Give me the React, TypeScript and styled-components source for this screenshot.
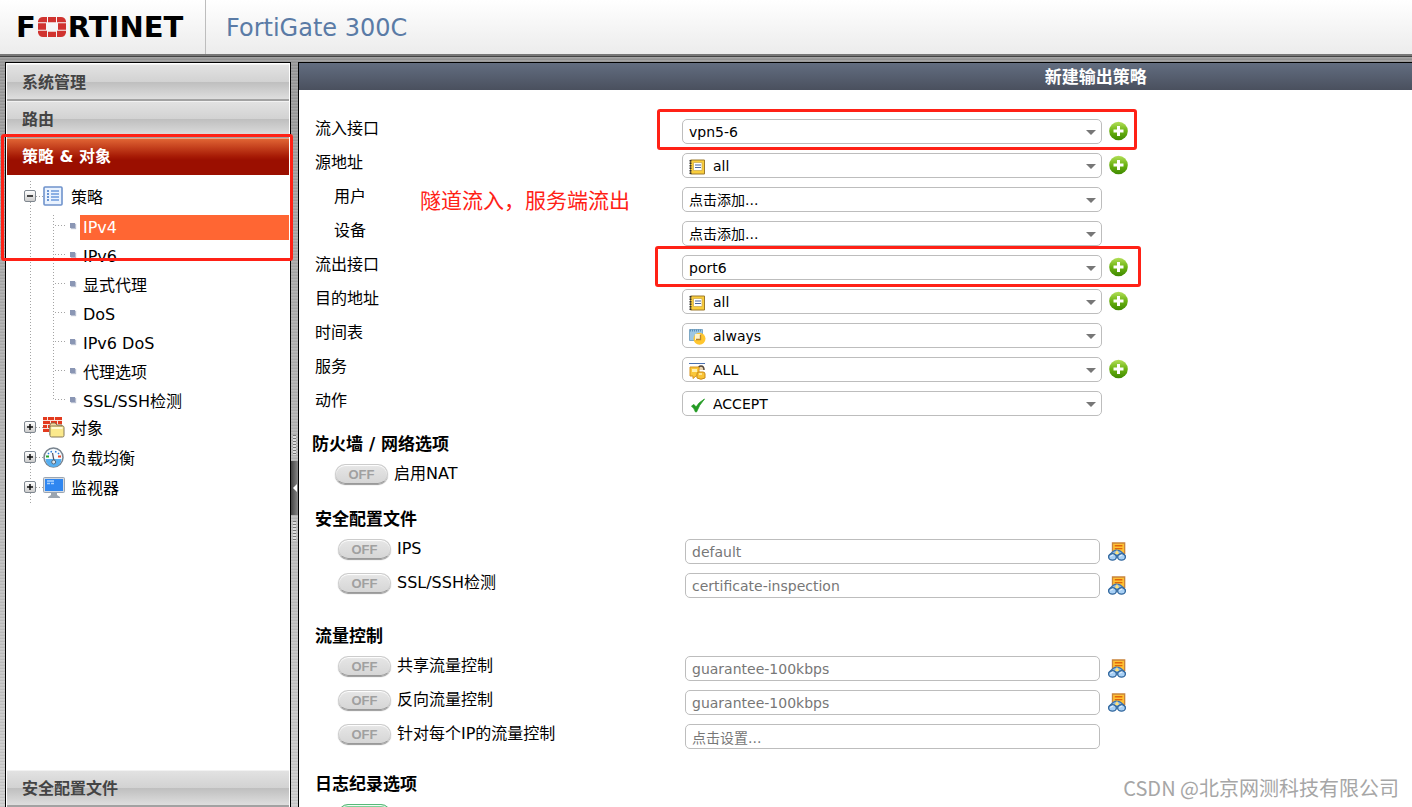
import React, { useId } from "react";
import styled, { createGlobalStyle, css } from "styled-components";

const uiFont = `"DejaVu Sans", "Noto Sans CJK SC", sans-serif`;
const markRed = "#ff2116";

const GlobalStyle = createGlobalStyle`
  *, *::before, *::after { box-sizing: border-box; }
  body { margin: 0; font-family: ${uiFont}; font-size: 16px; color: #000; }
  ul, h1, h2 { margin: 0; padding: 0; list-style: none; }
  svg { display: block; flex: none; }
`;

const Page = styled.div`
  position: relative;
  display: flex;
  flex-direction: column;
  height: 100vh;
  overflow: hidden;
  background:
    repeating-linear-gradient(rgba(255, 255, 255, 0.1) 0 1px, transparent 1px 2px, rgba(0, 0, 0, 0.06) 2px 3px),
    linear-gradient(#959595, #b0b0b0 40%, #cfcfcf);
`;

const Header = styled.header`
  display: flex;
  flex: none;
  height: 56px;
  border-bottom: 2px solid #777;
  background: linear-gradient(#fff, #ececec);
`;

const Logo = styled.div`
  display: flex;
  align-items: center;
  gap: 2px;
  width: 206px;
  padding-left: 16px;
  border-right: 1px solid #bdbdbd;
  font-size: 29px;
  line-height: 56px;
  font-weight: 700;
`;

const Product = styled.div`
  padding-left: 20px;
  font-size: 24px;
  line-height: 56px;
  color: #5a7ba6;
`;

const Body = styled.div`
  display: flex;
  flex: 1;
  min-height: 0;
  border-top: 1px solid #444;
  padding: 5px 0 0 5px;
`;

const Sidebar = styled.nav`
  position: relative;
  display: flex;
  flex: none;
  flex-direction: column;
  width: 286px;
  border: 1px solid #000;
  border-bottom: 0;
  padding: 1px 1px 0;
  background: #fff;
`;

const MenuItem = styled.button<{ $active?: boolean }>`
  flex: none;
  height: 37px;
  border: 0;
  border-top: 1px solid #f2f2f2;
  border-bottom: 2px solid #a2a2a2;
  padding: 1px 15px 0;
  text-align: left;
  font: 700 16px/33px ${uiFont};
  color: #444;
  background: linear-gradient(#e2e2e2, #d2d2d2 50%, #bfbfbf 51%, #dedede);
  ${(p) =>
    p.$active &&
    css`
      color: #fff;
      border-top-color: #f0a080;
      border-bottom-color: #9b0f00;
      background: linear-gradient(#e06434, #a81c06 50%, #9b0f00 62%);
    `}
`;

const dots = "repeating-linear-gradient(#a4a4a4 0 1px, transparent 1px 3px)";
const hdots = "repeating-linear-gradient(90deg, #a4a4a4 0 1px, transparent 1px 3px)";

const Tree = styled.ul`
  display: flex;
  flex-direction: column;
  margin: 6px 0 auto;
  background: ${dots} 23px 0 / 1px 100% no-repeat;
`;

const BranchRow = styled.div<{ $tall?: boolean }>`
  display: flex;
  align-items: center;
  height: ${(p) => (p.$tall ? 34 : 30)}px;
  padding-left: 17px;
`;

const Expander = styled.button`
  display: grid;
  place-items: center;
  width: 12px;
  height: 12px;
  margin-bottom: 4px;
  border: 1px solid #808890;
  border-radius: 2px;
  padding: 0;
  background: linear-gradient(#fff, #ccc);
`;

const Dash = styled.span<{ $w: number }>`
  width: ${(p) => p.$w}px;
  height: 1px;
  margin-bottom: 4px;
  background: ${hdots};
`;

const BranchLink = styled.a`
  display: grid;
  grid-template-columns: 28px auto;
  align-items: center;
  color: #000;
  text-decoration: none;
  line-height: 24px;
  svg { margin-bottom: 4px; }
`;

const Leaves = styled.ul`
  display: flex;
  flex-direction: column;
  gap: 4px;
  background: ${dots} 46px 0 / 1px 184px no-repeat;
`;

const Leaf = styled.li`
  display: flex;
  align-items: center;
  height: 25px;
  padding-left: 48px;
`;

const Bullet = styled.span`
  width: 5px;
  height: 5px;
  margin: 0 5px 4px 4px;
  background: #8a96b4;
  box-shadow: 1px 1px 1px #b8bfd0;
`;

const LeafLink = styled.a<{ $active?: boolean }>`
  flex: 1;
  padding-left: 3px;
  line-height: 25px;
  text-decoration: none;
  color: ${(p) => (p.$active ? "#fff" : "#000")};
  background: ${(p) => (p.$active ? "#ff6633" : "transparent")};
`;

const Splitter = styled.div`
  display: flex;
  flex: none;
  flex-direction: column;
  align-items: center;
  justify-content: center;
  gap: 6px;
  width: 7px;
  padding-top: 106px;
`;

const Grip = styled.span`
  width: 3px;
  height: 20px;
  background: repeating-linear-gradient(#777 0 1px, #ddd 1px 3px);
`;

const Collapse = styled.button`
  display: grid;
  place-items: center;
  width: 7px;
  height: 54px;
  border: 0;
  padding: 0;
  background: linear-gradient(90deg, #444, #888);
`;

const Panel = styled.main`
  flex: 1;
  min-width: 0;
  border: solid #000;
  border-width: 1px 0 0 1px;
  background: #fff;
`;

const PanelTitle = styled.h1`
  padding: 1px 0 0 67%;
  font-size: 17px;
  line-height: 26px;
  color: #fff;
  background: linear-gradient(#626d80, #4a505e);
`;

const Form = styled.form`
  position: relative;
  padding: 29px 0 0 13px;
`;

const Section = styled.section<{ $space?: number; $indent?: number }>`
  display: flex;
  flex-direction: column;
  gap: 8px;
  margin-top: ${(p) => p.$space ?? 0}px;
  padding-left: ${(p) => p.$indent ?? 3}px;
`;

const SectionTitle = styled.h2`
  font-size: 17px;
  line-height: 24px;
`;

const Row = styled.div`
  display: grid;
  grid-template-columns: 367fr 420fr 310fr;
  height: 26px;
`;

const Label = styled.label<{ $nested?: boolean }>`
  padding-left: ${(p) => (p.$nested ? 19 : 0)}px;
  line-height: 19px;
`;

const SwitchCell = styled.div`
  display: flex;
  gap: 6px;
  padding-left: 23px;
`;

const Switch = styled.span`
  display: grid;
  flex: none;
  width: 53px;
  height: 21px;
  > * { grid-area: 1 / 1; }
`;

const SwitchBox = styled.input`
  appearance: none;
  width: 100%;
  height: 20px;
  margin: 0;
  border: 1px solid #ccc;
  border-bottom-color: #999;
  border-radius: 10px;
  background: linear-gradient(#e6e6e6, #d6d6d6);
  box-shadow: 0 1px 1px #999, inset 0 1px 1px #fff;
  &:checked { border-color: #57b878; background: #6fd08c; }
`;

const SwitchText = styled.span`
  font: 700 13px/21px "Liberation Sans", Arial, sans-serif;
  text-align: center;
  color: #a0a0a0;
  pointer-events: none;
`;

const FieldCell = styled.div`
  position: relative;
`;

const fieldBox = css`
  width: 100%;
  height: 25px;
  border: 1px solid #bdbdbd;
  border-radius: 5px;
  background: #fff;
  font: 14px/22px ${uiFont};
`;

const Select = styled.select<{ $icon?: boolean }>`
  ${fieldBox}
  display: block;
  appearance: none;
  padding: 1px 24px 0 ${(p) => (p.$icon ? 30 : 6)}px;
  color: #000;
`;

const TextField = styled.input`
  ${fieldBox}
  width: calc(100% - 5px);
  margin-left: 3px;
  padding: 1px 6px 0;
  color: #777;
`;

const SelectIcon = styled.span`
  position: absolute;
  left: 7px;
  top: 6px;
  pointer-events: none;
`;

const Caret = styled.span`
  position: absolute;
  right: 6px;
  top: 11px;
  border: solid transparent;
  border-width: 5px 5px 0;
  border-top-color: #777;
  pointer-events: none;
`;

const IconButton = styled.button`
  justify-self: start;
  width: 20px;
  height: 22px;
  margin-left: 6px;
  border: 0;
  padding: 2px 0 0;
  background: none;
`;

const Mark = styled.span<{ $inset: string }>`
  position: absolute;
  inset: ${(p) => p.$inset};
  border: 3px solid ${markRed};
  border-radius: 3px;
  pointer-events: none;
  z-index: 1;
`;

const SidebarMark = styled(Mark)`
  height: 127px;
`;

const Note = styled.p`
  position: absolute;
  left: 121px;
  top: 96px;
  margin: 0;
  font-size: 21px;
  line-height: 30px;
  color: ${markRed};
`;

const Watermark = styled.p`
  position: absolute;
  right: 13px;
  bottom: 5px;
  margin: 0;
  font: 20px/28px "Noto Sans CJK SC", sans-serif;
  color: #a6a6a6;
`;

const LogoMark = () => (
  <svg width="28" height="20" viewBox="0 0 28 19" preserveAspectRatio="none" fill="#d0332f" aria-hidden="true">
    <path d="M5 0h4v5H0V4q1-4 5-4zM10 0h8v5h-8zM19 0h4q4 0 5 4v1h-9zM0 6h8v6H0zM20 6h8v6h-8zM0 13h9v6H5q-4 0-5-4zM10 14h8v5h-8zM19 13h9v2q-1 4-5 4h-4z" />
  </svg>
);

const PolicyIcon = () => (
  <svg width="20" height="20" viewBox="0 0 20 20" aria-hidden="true">
    <rect x="1" y="1" width="18" height="18" rx="1" fill="#eaf3ff" stroke="#6f93cc" strokeWidth="1.6" />
    <path d="M4 5h2M4 8h2M4 11h2M4 14h2" stroke="#3f75c4" strokeWidth="1.5" />
    <path d="M8 5h8M8 8h8M8 11h8M8 14h8" stroke="#6d9bdb" strokeWidth="1.5" />
  </svg>
);

const ObjectsIcon = () => (
  <svg width="22" height="21" viewBox="0 0 22 21" aria-hidden="true">
    <path d="M0 0h19v15H0z" fill="#f8e2dc" />
    <path d="M0 0h4v3H0zM5 0h6v3H5zM12 0h7v3h-7zM0 4h7v3H0zM8 4h6v3H8zM15 4h4v3h-4zM0 8h4v3H0zM5 8h6v3H5zM0 12h6v3H0z" fill="#e33a1e" />
    <path d="M7 18V8q0-2 2-2h3l2 2h5v3" fill="#f5d9a0" stroke="#8b7350" />
    <rect x="7" y="9" width="14" height="11" rx="1.5" fill="#fbe98c" stroke="#85785a" />
    <path d="M8.500 11h11" stroke="#fffbd8" strokeWidth="2" />
  </svg>
);

const GaugeIcon = () => (
  <svg width="21" height="21" viewBox="0 0 21 21" aria-hidden="true">
    <circle cx="10.500" cy="10.500" r="9.500" fill="#f6fbff" stroke="#78838e" strokeWidth="1.500" />
    <path d="M2.500 12h16a8 8 0 0 1-16 0z" fill="#55aef0" />
    <path d="M5 6l1 1M8 4l.5 1.500M13 4l-.5 1.500M16 6l-1 1" stroke="#2879d8" strokeWidth="1.500" />
    <path d="M3 8.500h3v2H3z" fill="#2ba52b" />
    <path d="M15 8.500h3v2h-3z" fill="#e6492d" />
    <path d="M9.500 6l1.500 8" stroke="#556" strokeWidth="1.300" />
    <circle cx="10.700" cy="15" r="2" fill="#dde8f0" stroke="#567" />
  </svg>
);

const MonitorIcon = () => (
  <svg width="22" height="21" viewBox="0 0 22 21" aria-hidden="true">
    <rect x=".5" y=".5" width="21" height="15" rx="1" fill="#d5dae0" stroke="#9aa5b2" />
    <path d="M2 2h18v12H2z" fill="#2f86f0" />
    <path d="M4 4h7M4 6.500h3M8 6.500h3" stroke="#a9d2ff" strokeWidth="1.500" />
    <path d="M8 16h6v2l3 2v1H5v-1l3-2z" fill="#9ba5b0" />
  </svg>
);

const AddIcon = () => (
  <svg width="20" height="20" viewBox="0 0 20 20" aria-hidden="true">
    <defs>
      <linearGradient id="addFill" x1="0" y1="0" x2="0" y2="1">
        <stop offset="0" stopColor="#b4e05a" />
        <stop offset=".5" stopColor="#6cb312" />
        <stop offset="1" stopColor="#3f8a00" />
      </linearGradient>
    </defs>
    <circle cx="10.500" cy="10" r="9.300" fill="url(#addFill)" />
    <path d="M9 5h3v3.500h3.500v3H12V15H9v-3.500H5.500v-3H9z" fill="#fff" />
  </svg>
);

const BrowseIcon = () => (
  <svg width="18" height="19" viewBox="0 0 20 20" preserveAspectRatio="none" aria-hidden="true">
    <path d="M5 1h13.500v11H5z" fill="#ffc233" stroke="#c9843c" strokeWidth="1.500" />
    <path d="M7.500 4h8.500M7.500 7h8.500" stroke="#e0650a" strokeWidth="1.500" />
    <path d="M1.500 14q5-6 8.500-5.500Q14 8.500 18.500 14z" fill="#8fb9e2" stroke="#3d73ae" strokeWidth="1.300" />
    <path d="M10 8.500l2.800 4.500H7.200z" fill="#ffe27a" />
    <ellipse cx="5" cy="15.700" rx="4.300" ry="3.400" fill="#a8d0f5" stroke="#34699f" strokeWidth="1.500" />
    <ellipse cx="15" cy="15.700" rx="4.300" ry="3.400" fill="#a8d0f5" stroke="#34699f" strokeWidth="1.500" />
    <path d="M3 15.500q1-2 3-2M13 15.500q1-2 3-2" stroke="#fff" fill="none" />
  </svg>
);

const AddressIcon = () => (
  <svg width="16" height="16" viewBox="0 0 16 16" aria-hidden="true">
    <path d="M1.500 1h14v14h-14z" fill="#f9cd3c" stroke="#9d7a2c" />
    <path d="M1.500 1v14" stroke="#333" strokeWidth="2" strokeDasharray="1.500 1" />
    <path d="M4.500 3.500h8.500v8H4.500z" fill="#fff" stroke="#c9a64a" strokeWidth=".7" />
    <path d="M6 6h6M6 8.500h6" stroke="#4a66a0" strokeWidth="1.200" />
  </svg>
);

const ScheduleIcon = () => (
  <svg width="17" height="16" viewBox="0 0 17 16" aria-hidden="true">
    <path d="M.5.500h13v11H.5z" fill="#9cc6e2" stroke="#7fa9c6" />
    <path d="M1 1.500h12" stroke="#5a8fb8" strokeWidth="2" strokeDasharray="1 1" />
    <circle cx="10.500" cy="9.800" r="6" fill="#ffc62e" />
    <path d="M6 5h6v6H6z" fill="#fff3c8" />
    <path d="M11.500 5.500v5H7" stroke="#b7852c" fill="none" strokeWidth="1.300" />
  </svg>
);

const ServiceIcon = () => (
  <svg width="17" height="17" viewBox="0 0 17 17" aria-hidden="true">
    <path d="M0 .500h16" stroke="#4a6fae" />
    <path d="M9 7q0-4 3-4t3 4" fill="#ead3ae" stroke="#54473a" strokeWidth="1.500" />
    <path d="M1 4h9v9H7l-3 2.500V13H1z" fill="#f9c73a" stroke="#d8941f" />
    <path d="M3 6h5v3H3z" fill="#fff0b0" />
    <path d="M8 15v-4q0-2 2-2h4q2 0 2 2v4q-4 2.500-8 0z" fill="#f9c335" stroke="#c98a1b" />
    <path d="M10 11h3" stroke="#fff0b0" strokeWidth="1.500" />
  </svg>
);

const AcceptIcon = () => (
  <svg width="17" height="16" viewBox="0 0 17 16" aria-hidden="true">
    <path d="M2.500 9L5 7.500 7 10Q10 5 15.500 2 10 8 7.500 15H6.500Q5 11 2.500 9z" fill="#239a23" stroke="#239a23" strokeWidth=".8" />
  </svg>
);

const ExpanderGlyph = ({ open }: { open?: boolean }) => (
  <svg width="8" height="8" viewBox="0 0 8 8" stroke="#111" strokeWidth="1.500" aria-hidden="true">
    <path d={open ? "M1 4h6" : "M1 4h6M4 1v6"} />
  </svg>
);

type SelectRowProps = {
  label: string;
  value: string;
  icon?: React.ReactNode;
  nested?: boolean;
  addable?: boolean;
  mark?: string;
};

function SelectRow({ label, value, icon, nested, addable, mark }: SelectRowProps) {
  const id = useId();
  return (
    <Row>
      <Label htmlFor={id} $nested={nested}>{label}</Label>
      <FieldCell>
        <Select id={id} $icon={!!icon} defaultValue={value}>
          <option value={value}>{value}</option>
        </Select>
        {icon && <SelectIcon>{icon}</SelectIcon>}
        <Caret />
        {mark && <Mark $inset={mark} />}
      </FieldCell>
      {addable && (
        <IconButton type="button" aria-label={`添加${label}`}><AddIcon /></IconButton>
      )}
    </Row>
  );
}

type SwitchRowProps = { label: string; value?: string; browse?: boolean };

function SwitchRow({ label, value, browse }: SwitchRowProps) {
  const id = useId();
  return (
    <Row>
      <SwitchCell>
        <Switch>
          <SwitchBox id={id} type="checkbox" />
          <SwitchText>OFF</SwitchText>
        </Switch>
        <Label htmlFor={id}>{label}</Label>
      </SwitchCell>
      {value && <TextField aria-label={label} defaultValue={value} />}
      {browse && (
        <IconButton type="button" aria-label={`查看${label}`}><BrowseIcon /></IconButton>
      )}
    </Row>
  );
}

const policyLeaves = ["IPv4", "IPv6", "显式代理", "DoS", "IPv6 DoS", "代理选项", "SSL/SSH检测"];

const branches = [
  { name: "对象", icon: <ObjectsIcon /> },
  { name: "负载均衡", icon: <GaugeIcon /> },
  { name: "监视器", icon: <MonitorIcon /> },
];

export default function App() {
  return (
    <Page>
      <GlobalStyle />
      <Header>
        <Logo><span>F</span><LogoMark /><span>RTINET</span></Logo>
        <Product>FortiGate 300C</Product>
      </Header>
      <Body>
        <Sidebar>
          <MenuItem>系统管理</MenuItem>
          <MenuItem>路由</MenuItem>
          <MenuItem $active>策略 &amp; 对象</MenuItem>
          <Tree>
            <li>
              <BranchRow $tall>
                <Expander aria-label="收起策略"><ExpanderGlyph open /></Expander>
                <Dash $w={7} />
                <BranchLink href="#policy"><PolicyIcon />策略</BranchLink>
              </BranchRow>
              <Leaves>
                {policyLeaves.map((name, i) => (
                  <Leaf key={name}>
                    <Dash $w={11} />
                    <Bullet />
                    <LeafLink href={`#policy-${i}`} $active={i === 0}>{name}</LeafLink>
                  </Leaf>
                ))}
              </Leaves>
            </li>
            {branches.map((b) => (
              <li key={b.name}>
                <BranchRow>
                  <Expander aria-label={`展开${b.name}`}><ExpanderGlyph /></Expander>
                  <Dash $w={7} />
                  <BranchLink href="#branch">{b.icon}{b.name}</BranchLink>
                </BranchRow>
              </li>
            ))}
          </Tree>
          <MenuItem>安全配置文件</MenuItem>
          <SidebarMark $inset="71px -3px auto -5px" />
        </Sidebar>
        <Splitter>
          <Grip />
          <Collapse aria-label="收起菜单">
            <svg width="6" height="10" viewBox="0 0 6 10" aria-hidden="true"><path d="M5 1v8L1 5z" fill="#fff" /></svg>
          </Collapse>
          <Grip />
        </Splitter>
        <Panel>
          <PanelTitle>新建输出策略</PanelTitle>
          <Form>
            <Section>
              <SelectRow label="流入接口" value="vpn5-6" addable mark="-10px -35px -5px -25px" />
              <SelectRow label="源地址" value="all" icon={<AddressIcon />} addable />
              <SelectRow label="用户" value="点击添加..." nested />
              <SelectRow label="设备" value="点击添加..." nested />
              <SelectRow label="流出接口" value="port6" addable mark="-9px -39px -6px -27px" />
              <SelectRow label="目的地址" value="all" icon={<AddressIcon />} addable />
              <SelectRow label="时间表" value="always" icon={<ScheduleIcon />} />
              <SelectRow label="服务" value="ALL" icon={<ServiceIcon />} addable />
              <SelectRow label="动作" value="ACCEPT" icon={<AcceptIcon />} />
            </Section>
            <Section $space={15} $indent={0}>
              <SectionTitle>防火墙 / 网络选项</SectionTitle>
              <SwitchRow label="启用NAT" />
            </Section>
            <Section $space={17}>
              <SectionTitle>安全配置文件</SectionTitle>
              <SwitchRow label="IPS" value="default" browse />
              <SwitchRow label="SSL/SSH检测" value="certificate-inspection" browse />
            </Section>
            <Section $space={25}>
              <SectionTitle>流量控制</SectionTitle>
              <SwitchRow label="共享流量控制" value="guarantee-100kbps" browse />
              <SwitchRow label="反向流量控制" value="guarantee-100kbps" browse />
              <SwitchRow label="针对每个IP的流量控制" value="点击设置..." />
            </Section>
            <Section $space={22}>
              <SectionTitle>日志纪录选项</SectionTitle>
              <Row>
                <SwitchCell>
                  <Switch>
                    <SwitchBox type="checkbox" defaultChecked aria-label="日志纪录" />
                  </Switch>
                </SwitchCell>
              </Row>
            </Section>
            <Note>隧道流入，服务端流出</Note>
          </Form>
        </Panel>
      </Body>
      <Watermark>CSDN @北京网测科技有限公司</Watermark>
    </Page>
  );
}
